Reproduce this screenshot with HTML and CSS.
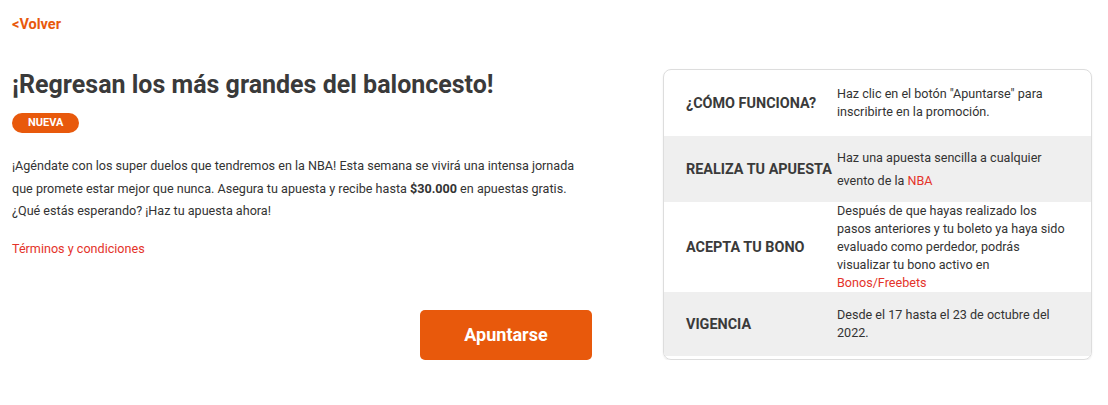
FILE: index.html
```html
<!DOCTYPE html>
<html lang="es">
<head>
  <meta charset="UTF-8">
  <title>Promoción NBA</title>
  <link rel="stylesheet" href="styles.css">
</head>
<body>
  <a class="back" href="#">&lt;Volver</a>

  <div class="promo">
    <div class="info">
      <h1>¡Regresan los más grandes del baloncesto!</h1>
      <span class="badge">NUEVA</span>
      <p class="desc">
        ¡Agéndate con los super duelos que tendremos en la NBA! Esta semana se vivirá una intensa jornada
        que promete estar mejor que nunca. Asegura tu apuesta y recibe hasta <b>$30.000</b> en apuestas gratis.
        ¿Qué estás esperando? ¡Haz tu apuesta ahora!
      </p>
      <a class="terms" href="#">Términos y condiciones</a>
      <div class="actions">
        <button class="join-btn">Apuntarse</button>
      </div>
    </div>

    <div class="card">
      <div class="row">
        <div class="label">¿CÓMO FUNCIONA?</div>
        <div class="text">Haz clic en el botón "Apuntarse" para inscribirte en la promoción.</div>
      </div>
      <div class="row grey">
        <div class="label">REALIZA TU APUESTA</div>
        <div class="text tall">Haz una apuesta sencilla a cualquier evento de la <a href="#">NBA</a></div>
      </div>
      <div class="row">
        <div class="label">ACEPTA TU BONO</div>
        <div class="text">Después de que hayas realizado los pasos anteriores y tu boleto ya haya sido evaluado como perdedor, podrás visualizar tu bono activo en <a href="#">Bonos/Freebets</a></div>
      </div>
      <div class="row grey last">
        <div class="label">VIGENCIA</div>
        <div class="text">Desde el 17 hasta el 23 de octubre del 2022.</div>
      </div>
    </div>
  </div>
</body>
</html>
```

FILE: styles.css
```css
body {
  margin: 0;
  padding: 14px 16px 0 12px;
  font-family: Roboto, "Liberation Sans", sans-serif;
  color: #333;
  background: #fff;
}
a {
  text-decoration: none;
}
.back {
  display: inline-block;
  font-size: 14.5px;
  font-weight: bold;
  color: #e8590c;
  line-height: 20px;
}
.promo {
  display: flex;
  justify-content: space-between;
  margin-top: 34px;
}
.info {
  width: 585px;
  padding-top: 1px;
}
h1 {
  margin: 0;
  font-size: 25px;
  line-height: 30px;
  color: #3a3a3a;
}
.badge {
  display: inline-block;
  margin-top: 13px;
  padding: 0 16px;
  height: 20px;
  line-height: 20px;
  border-radius: 10px;
  background: #e8590c;
  color: #fff;
  font-size: 11px;
  font-weight: bold;
}
.desc {
  margin: 22px 0 0;
  font-size: 12.6px;
  line-height: 22.5px;
}
.terms {
  display: inline-block;
  margin-top: 18px;
  font-size: 12.6px;
  color: #e4332a;
}
.actions {
  display: flex;
  justify-content: flex-end;
  margin-top: 53px;
  padding-right: 5px;
}
.join-btn {
  width: 172px;
  height: 50px;
  border: none;
  border-radius: 5px;
  background: #e8590c;
  color: #fff;
  font-family: Roboto, "Liberation Sans", sans-serif;
  font-size: 18px;
  font-weight: bold;
  cursor: pointer;
}
.card {
  width: 427px;
  border: 1px solid #ddd;
  border-radius: 8px;
  overflow: hidden;
  box-shadow: 0 1px 2px rgba(0, 0, 0, 0.08);
}
.row {
  display: grid;
  grid-template-columns: 151px 1fr;
  align-items: center;
  min-height: 66px;
  padding: 0 22px;
}
.row.grey {
  background: #efefef;
}
.row.last {
  min-height: 64px;
}
.label {
  font-size: 14.4px;
  font-weight: bold;
  color: #3a3a3a;
}
.text {
  font-size: 12.6px;
  line-height: 18px;
}
.text.tall {
  line-height: 23px;
}
.text a {
  color: #e4332a;
}
```
